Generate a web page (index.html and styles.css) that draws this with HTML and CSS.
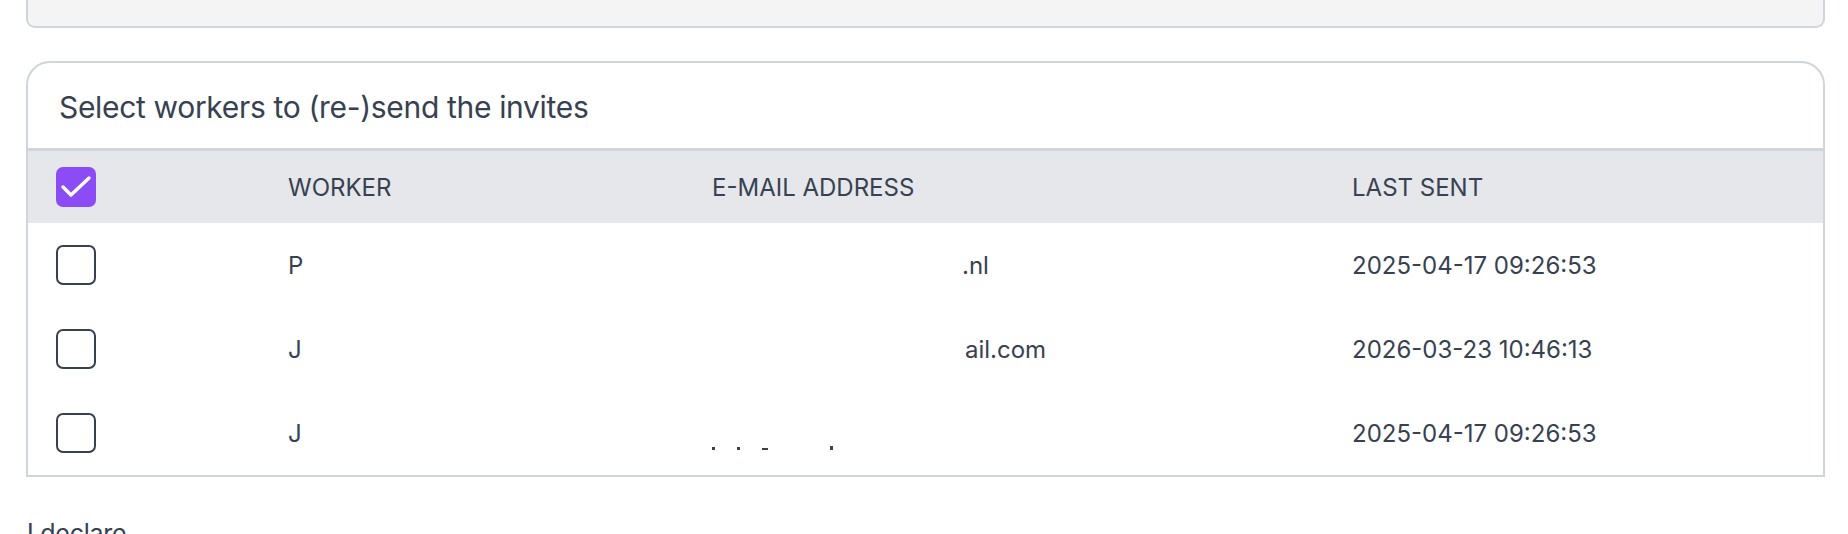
FILE: index.html
```html
<!DOCTYPE html>
<html lang="en">
<head>
<meta charset="utf-8">
<title>Invites</title>
<link rel="stylesheet" href="styles.css">
</head>
<body>
<div class="page">
  <div class="top-card"></div>

  <section class="card">
    <h2 class="card-title">Select workers to (re-)send the invites</h2>
    <div class="table">
      <div class="row head">
        <div class="cell check-cell">
          <span class="box checked">
            <svg viewBox="0 0 40 40" width="40" height="40"><path d="M7 20 L15 28 L33 11" fill="none" stroke="#fff" stroke-width="3.4" stroke-linecap="round" stroke-linejoin="round"/></svg>
          </span>
        </div>
        <div class="cell">WORKER</div>
        <div class="cell">E-MAIL ADDRESS</div>
        <div class="cell">LAST SENT</div>
      </div>
      <div class="row">
        <div class="cell check-cell"><span class="box"></span></div>
        <div class="cell">P</div>
        <div class="cell"><span class="mail-tail">.nl</span></div>
        <div class="cell">2025-04-17 09:26:53</div>
      </div>
      <div class="row">
        <div class="cell check-cell"><span class="box"></span></div>
        <div class="cell">J</div>
        <div class="cell"><span class="mail-tail alt">ail.com</span></div>
        <div class="cell">2026-03-23 10:46:13</div>
      </div>
      <div class="row">
        <div class="cell check-cell"><span class="box"></span></div>
        <div class="cell">J</div>
        <div class="cell"><span class="frag"><i></i><i></i><i class="wide"></i><i class="far"></i></span></div>
        <div class="cell">2025-04-17 09:26:53</div>
      </div>
    </div>
  </section>

  <p class="declare">I declare</p>
</div>
</body>
</html>
```

FILE: styles.css
```css
* { box-sizing: border-box; }

html, body {
  margin: 0;
  padding: 0;
  background: #ffffff;
}

body {
  font-family: Inter, "Liberation Sans", sans-serif;
  color: #374151;
}

.page {
  padding: 0 23px 0 26px;
}

.top-card {
  height: 28px;
  background: #f4f4f5;
  border: 2px solid #d1d5db;
  border-top: none;
  border-radius: 0 0 9px 9px;
}

.card {
  margin-top: 33px;
  border: 2px solid #d1d5db;
  border-radius: 24px 24px 0 0;
  background: #fff;
}

.card-title {
  margin: 0;
  height: 88px;
  display: flex;
  align-items: center;
  padding: 2px 0 0 31px;
  font-size: 30px;
  font-weight: 400;
  letter-spacing: -0.011em;
  color: #374151;
  border-bottom: 3px solid #d1d5db;
}

.table {
  display: flex;
  flex-direction: column;
}

.row {
  display: grid;
  grid-template-columns: 260px 424px 640px 1fr;
  align-items: center;
  height: 84px;
  font-size: 24px;
  letter-spacing: 0;
}

.row.head {
  height: 72px;
  background: #e5e7eb;
}

.check-cell {
  padding-left: 28px;
  display: flex;
  align-items: center;
}

.box {
  display: block;
  width: 40px;
  height: 40px;
  border: 2px solid #374151;
  border-radius: 7px;
  background: #fff;
}

.box.checked {
  border: none;
  background: #8b4cf6;
}

.box svg {
  display: block;
}

.mail-tail {
  display: inline-block;
  padding-left: 250px;
}

.mail-tail.alt {
  padding-left: 253px;
}

.frag {
  display: flex;
  gap: 22px;
  height: 10px;
  align-items: flex-end;
  transform: translateY(12px);
}

.frag i {
  display: block;
  width: 3px;
  height: 3px;
  background: #374151;
}

.frag i.wide {
  width: 6px;
  height: 2px;
}

.frag i.far {
  margin-left: 40px;
  height: 4px;
}

.declare {
  margin: 41px 0 0 1px;
  font-size: 25px;
  letter-spacing: -0.01em;
  color: #374151;
}
```
